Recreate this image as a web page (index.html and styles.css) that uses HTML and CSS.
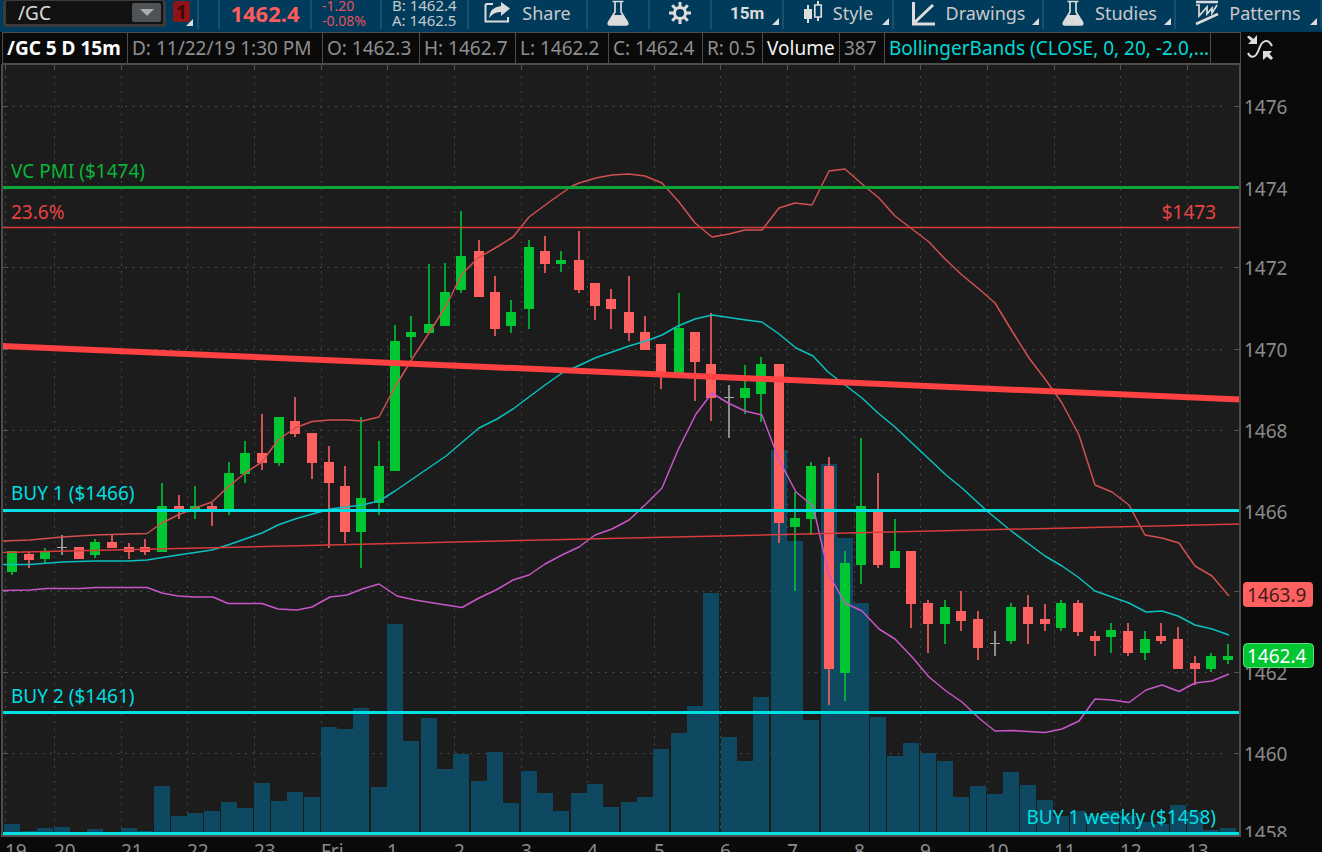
FILE: index.html
```html
<!DOCTYPE html>
<html lang="en">
<head>
<meta charset="utf-8">
<title>/GC 5 D 15m</title>
<link rel="stylesheet" href="styles.css">
</head>
<body>
<header class="toolbar">
  <div class="cell symbol-cell">
    <div class="symbol-box">
      <input class="symbol-input" type="text" value="/GC" aria-label="Symbol">
      <button class="symbol-toggle" type="button" aria-label="Choose symbol"><svg width="14" height="8" viewBox="0 0 14 8"><path d="M0 0H14L7 7Z" fill="#a9adb0"/></svg></button>
    </div>
    <button class="link-badge" type="button">1</button>
  </div>
  <div class="cell"></div>
  <div class="cell last-price">1462.4</div>
  <div class="cell pair change"><span>-1.20</span><span>-0.08%</span></div>
  <div class="cell pair quote"><span>B: 1462.4</span><span>A: 1462.5</span></div>
  <button class="cell tool" type="button">
    <svg width="28" height="24" viewBox="0 0 28 24"><path d="M9 3H3Q1.500 3 1.500 4.500V20.500H24V16" fill="none" stroke="#dcdcdc" stroke-width="2"/><path d="M17 1L26 7.500L17 15V11Q10 10.500 5 17Q6 6 17 5Z" fill="#dcdcdc"/></svg>
    <span>Share</span>
  </button>
  <button class="cell tool" type="button" aria-label="Studies shortcut">
    <svg width="24" height="27" viewBox="0 0 24 27"><path d="M6.500 1.500H17.500M9 1V12L2.500 22.500Q1.500 25 4 25H20Q22.500 25 21.500 22.500L15 12V1" fill="none" stroke="#dcdcdc" stroke-width="1.700"/><path d="M7 15H17L21.500 22.500Q22 25 20 25H4Q2 25 2.500 22.500Z" fill="#dcdcdc"/></svg>
  </button>
  <button class="cell tool" type="button" aria-label="Settings">
    <svg width="24" height="24" viewBox="-12 -12 24 24"><g stroke="#dcdcdc" stroke-width="3"><path d="M0-11V-6M0 6V11M-11 0H-6M6 0H11M-7.800-7.800L-4-4M4 4L7.800 7.800M-7.800 7.800L-4 4M4-4L7.800-7.800"/><circle r="5.500" fill="none"/></g></svg>
  </button>
  <button class="cell tool interval has-menu" type="button">15m</button>
  <button class="cell tool has-menu" type="button">
    <svg width="20" height="24" viewBox="0 0 20 24"><path d="M5 4V22M15 0V4M15 16V20" stroke="#dcdcdc" stroke-width="2"/><path d="M1 8H9V18H1Z" fill="#dcdcdc"/><path d="M11.800 4H18.200V16H11.800Z" fill="none" stroke="#dcdcdc" stroke-width="1.700"/></svg>
    <span>Style</span>
  </button>
  <button class="cell tool has-menu" type="button">
    <svg width="25" height="25" viewBox="0 0 25 25"><path d="M2.500 1V23H24M3 22L22 4" fill="none" stroke="#dcdcdc" stroke-width="3"/></svg>
    <span>Drawings</span>
  </button>
  <button class="cell tool has-menu" type="button">
    <svg width="24" height="27" viewBox="0 0 24 27"><path d="M6.500 1.500H17.500M9 1V12L2.500 22.500Q1.500 25 4 25H20Q22.500 25 21.500 22.500L15 12V1" fill="none" stroke="#dcdcdc" stroke-width="1.700"/><path d="M7 15H17L21.500 22.500Q22 25 20 25H4Q2 25 2.500 22.500Z" fill="#dcdcdc"/></svg>
    <span>Studies</span>
  </button>
  <button class="cell tool has-menu" type="button">
    <svg width="24" height="26" viewBox="0 0 24 26"><path d="M1 2H23M1 24L23 14" stroke="#dcdcdc" stroke-width="2.500"/><path d="M1 5H4V16L12 7V14L17 8V13L22 5" fill="none" stroke="#dcdcdc" stroke-width="1.700"/></svg>
    <span>Patterns</span>
  </button>
</header>

<section class="info-row">
  <div class="readout">
    <span class="field title">/GC 5 D 15m</span>
    <span class="field">D: 11/22/19 1:30 PM</span>
    <span class="field">O: 1462.3</span>
    <span class="field">H: 1462.7</span>
    <span class="field">L: 1462.2</span>
    <span class="field">C: 1462.4</span>
    <span class="field">R: 0.5</span>
    <span class="field volume">Volume</span>
    <span class="field">387</span>
    <span class="field bands">BollingerBands (CLOSE, 0, 20, -2.0,...</span>
    <span class="field spare"></span>
  </div>
  <button class="compare" type="button" aria-label="Swap view">
    <svg width="28" height="28" viewBox="0 0 28 28"><path d="M2 19C5 25 10 24 13 15S22 4 26 12" fill="none" stroke="#dcdcdc" stroke-width="2"/><path d="M11 1V10H2L5 7L1 3L3 1.500L7.500 5ZM17 17H26L23.500 20L27 24L25 26L21 22.500L17 26Z" fill="#dcdcdc"/></svg>
  </button>
</section>

<main class="chart-area">
  <svg class="chart" id="chart" viewBox="0 64 1322 788" role="img" aria-label="Gold futures, 15 minute candles"></svg>
</main>
<script src="chart.js"></script>
</body>
</html>
```

FILE: styles.css
```css
* { box-sizing: border-box; }

body {
  margin: 0;
  background: #0a0a0a;
  color: #8e8e8e;
  font-family: "Noto Sans", "Open Sans", sans-serif;
  font-size: 19px;
  overflow: hidden;
}

button, input { font: inherit; color: inherit; background: none; border: 0; margin: 0; padding: 0; }

.toolbar {
  display: grid;
  grid-template-columns: 199fr 21fr 92fr 70fr 87fr 119fr 62fr 62fr 72fr 110fr 150fr 132fr 146fr;
  height: 32px;
  background: #003b5c;
  color: #c9c9c9;
}

.cell {
  display: flex;
  align-items: center;
  min-width: 0;
  height: 29px;
  padding-bottom: 3px;
  border-right: 2px solid #1a4f6e;
  white-space: nowrap;
}
.cell:last-child { border-right-color: #0c4565; }

.symbol-cell { align-items: flex-start; padding-left: 3px; gap: 7px; }
.symbol-box {
  display: flex;
  align-items: center;
  flex: 1;
  max-width: 163px;
  height: 27px;
  padding: 0 2px 0 12px;
  background: #121212;
  border: 3px solid #3b3b3b;
  border-top-width: 1px;
  border-radius: 4px;
  color: #dcdcdc;
}
.symbol-input { flex: 1; min-width: 0; height: 23px; }
.symbol-toggle {
  display: flex;
  align-items: center;
  justify-content: center;
  width: 29px;
  height: 19px;
  background: #505356;
  border-radius: 2px;
}
.link-badge {
  position: relative;
  width: 17px;
  height: 21px;
  margin-top: 1px;
  background: #8e1417;
  border-radius: 2px;
  color: #3f0809;
  font-weight: 700;
  line-height: 20px;
}
.link-badge::after, .has-menu::after {
  content: "";
  position: absolute;
  right: -3px;
  bottom: -4px;
  border-left: 7px solid transparent;
  border-bottom: 7px solid #dcdcdc;
}

.last-price { justify-content: center; color: #ff5c5c; font-size: 22px; font-weight: 700; }
.pair { flex-direction: column; align-items: flex-start; justify-content: center; padding-left: 10px; font-size: 15px; line-height: 15px; }
.change { color: #e2525e; font-size: 14px; }
.quote { color: #c4c9cc; }

.tool { position: relative; justify-content: center; gap: 10px; font-size: 18px; }
.tool svg { flex: none; }
.has-menu::after { right: 3px; bottom: 4px; }
.interval { font-family: Roboto, sans-serif; font-weight: 700; font-size: 17px; color: #dcdcdc; }

.info-row { display: grid; grid-template-columns: 1241fr 81fr; height: 32px; }
.readout {
  display: grid;
  grid-template-columns: 125fr 195fr 97fr 96fr 93fr 94fr 60fr 77fr 45fr 326fr 29fr;
  margin-left: 2px;
  border: 1px solid #4c4c4c;
}
.field { min-width: 0; padding-left: 4px; border-right: 1px solid #4c4c4c; line-height: 30px; white-space: nowrap; }
.title { color: #fff; font-weight: 700; }
.volume { color: #f2f2f2; }
.bands { overflow: hidden; color: #00d8d8; }
.spare { border-right: 0; }
.compare { display: flex; align-items: center; padding-left: 5px; }

.chart { display: block; width: 100%; height: auto; }
.chart text { font-size: 19px; }
.chart .axis { fill: #8a8a8a; }
.plot { fill: #1c1c1c; }
.grid { stroke: #494949; stroke-width: 1; stroke-dasharray: 2 5.5; }
.tick { stroke: #555; stroke-width: 1; }
.frame { fill: none; stroke: #4c4c4c; stroke-width: 2; }
.bar { fill: #0e4b66; fill-opacity: .94; }
.up { fill: #00c632; stroke: #00c632; }
.down { fill: #ff6060; stroke: #ff6060; }
.doji { fill: #a8a8a8; stroke: #a8a8a8; }
.wick { stroke-opacity: .8; stroke-width: 2; }
.body { stroke: none; }
.band { fill: none; stroke-width: 1.5; stroke-linejoin: round; }
.upper { stroke: #d15050; }
.middle { stroke: #0bc0c0; }
.lower { stroke: #c956c9; }
.cyan-line { stroke: #00dfe2; stroke-width: 3; }
.green-line { stroke: #0ba636; stroke-width: 3; }
.red-line { stroke: #d83c3c; stroke-width: 1.5; }
.trend { stroke: #ff4141; stroke-width: 6; }
.cyan { fill: #00dfe2; }
.green { fill: #0bb53b; }
.red { fill: #e64444; }
.tag-red { fill: #ff6060; }
.tag-green { fill: #00c632; stroke: #65dc80; }
.tag-dark { fill: #451c1c; }
.tag-light { fill: #fff; }
```

FILE: chart.js
```js
const NS = "http://www.w3.org/2000/svg";
const chart = document.getElementById("chart");

function add(tag, attrs, text) {
  const el = document.createElementNS(NS, tag);
  for (const key in attrs) el.setAttribute(key, attrs[key]);
  if (text !== undefined) el.textContent = text;
  chart.appendChild(el);
  return el;
}

// left edge of the slot of the k-th candle
function slot(k) {
  const n = k - 1;
  return 21 + 49.97 * Math.floor(n / 3) + 16.33 * (((n % 3) + 3) % 3);
}

const line = (cls, x1, y1, x2, y2) => add("line", { class: cls, x1, y1, x2, y2 });

const volume = [
  824, 831, 828, 827, 833, 829, 832, 828, 831, 786, 816, 813, 811, 802, 808, 783, 801, 792, 797,
  727, 729, 708, 787, 624, 741, 718, 769, 754, 781, 752, 803, 771, 793, 811, 793, 784, 807, 802,
  797, 749, 733, 706, 593, 737, 761, 697, 450, 541, 720, 464, 538, 603, 717, 756, 743, 753, 761,
  797, 786, 794, 772, 785, 800, 816, 811, 816, 811, 816, 822, 824, 805, 812, 830, 828
];

// direction, high, body top, body bottom, low
const candles = `
u 551 551 572 575|d 552 554 560 568|u 548 552 559 563|x 535 547 548 555|d 547 547 559 559
u 539 542 555 558|d 535 542 548 548|d 543 547 552 559|d 539 547 552 555|u 483 506 552 552
d 495 506 510 519|u 486 506 510 519|d 503 506 510 526|u 462 473 509 515|u 441 453 474 483
d 414 453 463 470|u 417 417 463 466|d 397 421 434 437|d 433 433 463 479|d 446 462 483 548
d 466 486 532 543|u 417 498 532 568|u 441 466 503 515|u 325 341 471 471|u 316 332 337 358
u 264 324 333 333|u 263 292 326 326|u 211 256 290 293|d 240 251 297 297|d 276 292 329 336
u 300 312 326 333|u 240 247 309 329|d 236 251 264 273|u 251 260 264 272|d 231 260 290 293
d 283 283 306 320|d 289 299 309 329|d 276 312 333 341|d 316 332 350 350|d 344 344 372 389
u 293 328 373 373|d 332 332 362 401|d 313 364 398 421|x 385 397 398 438|u 365 388 398 414
u 357 364 394 422|d 364 364 523 543|u 492 518 527 591|u 462 466 519 535|d 457 466 669 705
u 551 563 673 701|u 438 506 565 584|d 473 510 565 568|u 519 551 568 568|d 551 551 604 628
d 600 603 624 653|u 600 607 624 644|d 591 611 621 631|d 611 619 648 660|x 631 643 644 656
u 603 607 641 644|d 595 607 624 644|d 604 619 624 631|u 600 603 628 631|d 600 603 632 636
d 631 636 641 656|u 623 630 637 653|d 623 631 653 656|u 631 639 653 660|d 623 636 641 644
d 627 639 669 669|d 656 663 669 685|u 653 656 669 672|u 644 656 660 664
`.trim().split(/[|\n]/).map(row => {
  const [kind, ...p] = row.trim().split(" ");
  return { kind: { u: "up", d: "down", x: "doji" }[kind], p: p.map(Number) };
});

const bands = {
  upper: "2,541 30,540 62,537 95,535 128,534 147,533.5 162,523 178,515 195,508 212,502 228,487 245,473 262,462 278,440 295,428 312,421.500 330,420 347,420 362,421 379,417 395,387 412,359 429,333 446,306 462,274 478,258 497,247 513,237 529,217 552,200 572,186 579,183 596,178 612,175 629,174 645,176 662,183 679,202 695,223 712,237 729,234 745,230 762,230 779,208 795,203 812,205 829,171 845,169 862,184 879,198 895,216 912,229 929,242 945,259 962,275 979,289 995,303 1012,331 1029,358 1045,379 1062,403 1079,435 1095,485 1112,492 1129,505 1145,535 1162,538 1179,543 1195,566 1212,576 1229,596",
  middle: "2,564.500 30,564.500 62,562 95,561 128,561 147,560 178,555 212,550 228,545 262,533 278,525 295,519 330,509 362,505 379,501 395,491 446,456 479,428 497,419 513,409 545,385 562,373 578,366 595,358 612,352 629,346 646,341 662,335 678,326 695,319 712,315 746,320 762,322 779,334 796,348 813,356 828,372 845,385 862,398 878,413 895,427 912,443 946,475 962,488 987,511 1010,530 1045,556 1062,566 1078,577 1095,591 1112,597 1129,603 1146,612 1162,611 1178,616 1195,625 1212,629 1229,635",
  lower: "2,590.500 30,590 47,588.500 80,588.500 95,587.500 147,587.500 162,593 178,596 195,597 213,597 228,603.500 262,603.500 278,609 297,610 312,607 330,597 347,595 362,589 379,584 397,596 415,600 446,605 462,607.500 479,598 496,590 513,580 529,575 545,564 562,555 579,547 595,535 612,529 629,520 646,504 662,488 678,450 696,414 712,393 728,403 745,411 762,415 779,460 796,492 813,506 829,575 845,603 862,611 879,629 895,639 913,658 929,677 946,691 962,702 980,719 995,731 1012,730.500 1028,731.500 1045,732.500 1062,729 1079,721 1095,699 1112,700 1129,702.500 1146,690 1162,685 1179,691.500 1195,683 1212,681 1229,674"
};

const plotLeft = 2, plotRight = 1240, plotTop = 64, plotBottom = 836;
add("rect", { class: "plot", x: plotLeft, y: plotTop, width: plotRight - plotLeft, height: plotBottom - plotTop });

const prices = [[1476, 106], [1474, 188], [1472, 267], [1470, 349], [1468, 430], [1466, 511], [1464, 591], [1462, 672], [1460, 753]];
for (const [, y] of prices) {
  line("grid", 5, y + .5, plotRight - 14, y + .5);
  line("tick", plotLeft, y + .5, plotLeft + 6, y + .5);
  line("tick", plotRight - 6, y + .5, plotRight, y + .5);
}
const hours = [5, 54, 121, 187, 254, 321, 387, 454, 521, 587, 654, 720, 787, 854, 920, 987, 1054, 1120, 1187];
for (const x of hours) {
  line("grid", x + .5, 76, x + .5, plotBottom);
  line("tick", x + .5, plotTop, x + .5, plotTop + 6);
}

volume.forEach((y, k) => {
  add("rect", { class: "bar", x: Math.round(slot(k)), y, width: 16, height: plotBottom - y });
});

candles.forEach(({ kind, p }, k) => {
  const x = Math.round(slot(k) + 8);
  const [high, open, close, low] = p;
  line("wick " + kind, x, high, x, low);
  add("rect", { class: "body " + kind, x: x - 5, y: open, width: 10, height: close - open });
});

for (const name in bands) add("polyline", { class: "band " + name, points: bands[name] });

line("green-line", plotLeft, 187.5, plotRight, 187.5);
line("red-line", plotLeft, 227.5, plotRight, 227.5);
line("red-line", plotLeft, 552.500, plotRight, 524);
line("trend", plotLeft, 346, plotRight, 399.500);
for (const y of [510.500, 712.5, 833.5]) line("cyan-line", plotLeft, y, plotRight, y);
add("path", { class: "frame", d: `M${plotLeft} ${plotTop}V${plotBottom}H${plotRight}V${plotTop}Z` });

const label = (cls, x, y, text, anchor = "start") => add("text", { class: cls, x, y, "text-anchor": anchor }, text);
label("green", 11, 178, "VC PMI ($1474)");
label("red", 11, 219, "23.6%");
label("red", 1216, 219, "$1473", "end");
label("cyan", 11, 500, "BUY 1 ($1466)");
label("cyan", 11, 703, "BUY 2 ($1461)");
label("cyan", 1216, 824, "BUY 1 weekly ($1458)", "end");

for (const [price, y] of prices) {
  if (price !== 1464) label("axis", 1244, y + 8, price);
}
label("axis", 1244, 840, "1458");
add("rect", { x: 1242, y: 837, width: 80, height: 15, fill: "#0a0a0a" });

const names = ["20", "21", "22", "23", "Fri", "1", "2", "3", "4", "5", "6", "7", "8", "9", "10", "11", "12", "13"];
label("axis", 5, 858, "19");
names.forEach((name, i) => label("axis", hours[i + 1], 858, name));

add("rect", { class: "tag-red", x: 1243, y: 582, width: 70, height: 25, rx: 4 });
label("tag-dark", 1247, 602, "1463.9");
add("rect", { class: "tag-green", x: 1243.500, y: 643.500, width: 70, height: 24, rx: 4 });
label("tag-light", 1247, 663, "1462.4");
```
